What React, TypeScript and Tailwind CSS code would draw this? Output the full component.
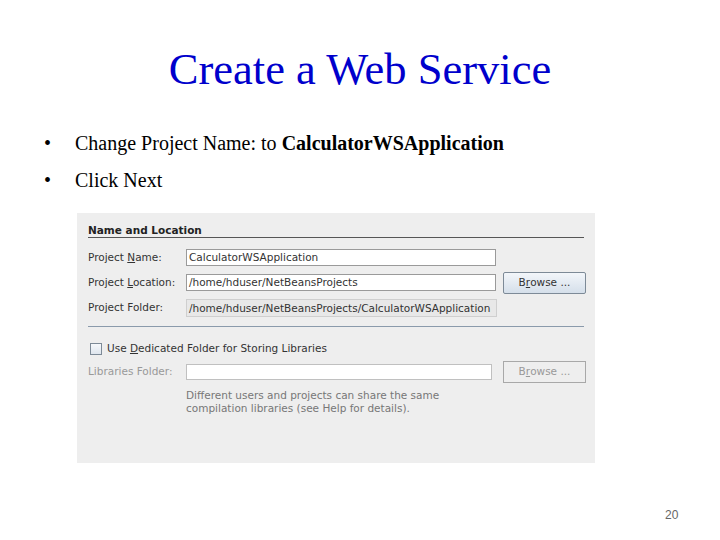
export default function App() {
  const dlg = { fontFamily: '"DejaVu Sans", sans-serif' };
  return (
    <div className="w-[720px] h-[540px] bg-white flex flex-col relative overflow-hidden" style={{ fontFamily: '"Liberation Serif", serif' }}>
      <div className="h-[44px]" />
      <div className="text-center text-[44.5px] leading-[50px] text-[#0000cc]">Create a Web Service</div>
      <div className="h-[37px]" />
      <div className="flex flex-col gap-[13px] text-[20px] leading-[24px] text-black">
        <div className="flex">
          <span className="w-[75px] pl-[44px]">•</span>
          <span>Change Project Name: to <b>CalculatorWSApplication</b></span>
        </div>
        <div className="flex">
          <span className="w-[75px] pl-[44px]">•</span>
          <span>Click Next</span>
        </div>
      </div>
      <div className="h-[21px]" />
      <div className="ml-[77px] w-[518px] h-[250px] bg-[#eeeeee] flex flex-col px-[11px] text-[10.5px] text-[#333]" style={dlg}>
        <div className="mt-[11px] font-bold text-[#222] leading-[13px]">Name and Location</div>
        <div className="h-px bg-[#555]" />
        <div className="mt-[7px] flex items-center h-[25px]">
          <span className="w-[98px] shrink-0">Project <u>N</u>ame:</span>
          <div className="w-[310px] shrink-0 h-[17px] bg-white border border-[#9a9a9a] px-[2px] leading-[15px]">CalculatorWSApplication</div>
        </div>
        <div className="flex items-center h-[25px]">
          <span className="w-[98px] shrink-0">Project <u>L</u>ocation:</span>
          <div className="w-[310px] shrink-0 h-[17px] bg-white border border-[#9a9a9a] px-[2px] leading-[15px]">/home/hduser/NetBeansProjects</div>
          <div className="ml-[7px] w-[83px] shrink-0 h-[22px] border border-[#7d8a97] rounded-[2px] bg-gradient-to-b from-[#f3f6fa] to-[#d5dfea] flex items-center justify-center text-[#333]">B<u>r</u>owse ...</div>
        </div>
        <div className="flex items-center h-[25px]">
          <span className="w-[98px] shrink-0">Project Folder:</span>
          <div className="w-[311px] shrink-0 h-[18px] bg-[#e8e8e8] border border-[#cfcfcf] px-[2px] leading-[16px] whitespace-nowrap overflow-hidden">/home/hduser/NetBeansProjects/CalculatorWSApplication</div>
        </div>
        <div className="h-px bg-[#8a9aab] mt-[6px]" />
        <div className="mt-[15px] flex items-center h-[13px]">
          <div className="ml-[2px] w-[12px] h-[12px] shrink-0 border border-[#7d8a97] bg-gradient-to-b from-[#f6f8fb] to-[#dfe6ee]" />
          <span className="ml-[5px]">Use <u>D</u>edicated Folder for Storing Libraries</span>
        </div>
        <div className="mt-[6px] flex items-center h-[22px]">
          <span className="w-[98px] shrink-0 text-[#999]">Libraries Folder:</span>
          <div className="w-[306px] shrink-0 h-[16px] bg-white border border-[#c0c0c0]" />
          <div className="ml-[11px] w-[83px] shrink-0 h-[22px] border border-[#a8a8a8] flex items-center justify-center text-[#999]">B<u>r</u>owse ...</div>
        </div>
        <div className="ml-[98px] mt-[6px] text-[#777] leading-[13px]">
          <div>Different users and projects can share the same</div>
          <div>compilation libraries (see Help for details).</div>
        </div>
      </div>
      <div className="mt-[43px] pl-[665px] text-[12px] text-[#666]" style={{ fontFamily: '"Liberation Sans", sans-serif' }}>20</div>
    </div>
  );
}
